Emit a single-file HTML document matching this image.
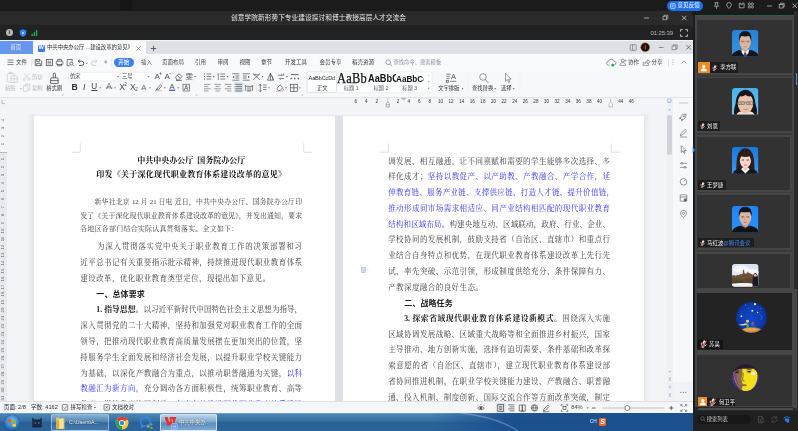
<!DOCTYPE html>
<html lang="zh-CN"><head><meta charset="utf-8"><title>meeting</title>
<style>
*{box-sizing:border-box;margin:0;padding:0}
html,body{width:798px;height:431px;overflow:hidden;background:#1c1c1d}
body{position:relative;font-family:"Liberation Sans","Noto Sans CJK SC",sans-serif;font-size:6px;color:#333;line-height:1}
.a{position:absolute}
.t{position:absolute;white-space:nowrap;line-height:1}
svg{position:absolute;overflow:visible}
#root{position:absolute;left:0;top:0;width:798px;height:431px;overflow:hidden;will-change:transform;transform:translateZ(0)}
/* document text */
.ln{position:absolute;font-weight:400;white-space:nowrap;font-family:"Liberation Serif","Noto Serif CJK SC",serif;font-size:7.500px;line-height:12px;height:12px;color:#3c3c3c;width:221.800px;text-align:justify;text-align-last:justify}
.ln.l{text-align:left;text-align-last:left;letter-spacing:0.420px}
.ln.s.l{letter-spacing:0.300px}
.ln.s{font-size:6.900px}
.ln b{font-weight:700;color:#222}
.ln b.hd{font-family:"Liberation Sans","Noto Sans CJK SC",sans-serif;font-size:8px;letter-spacing:0.100px}
.ln i{font-style:normal;color:#3434f4}
.ttl1{position:absolute;white-space:nowrap;margin-left:-1px;font-family:"Liberation Serif","Noto Serif CJK SC",serif;font-weight:700;font-size:8px;line-height:12px;color:#111;text-align:center;width:224px}
.ui{color:#3c4047}
</style></head>
<body>
<div id="root">

<div class="a" style="left:0;top:0;width:798px;height:11px;background:#1b1b1c"></div>
<div class="a" style="left:120px;top:0;width:12px;height:11px;background:#161617"></div>
<div class="a" style="left:0;top:11px;width:691.500px;height:14px;background:#2a2a2b"></div>
<div class="a" style="left:0;top:25.300px;width:691.500px;height:15.200px;background:#222223"></div><div class="a" style="left:691.500px;top:15px;width:3.800px;height:13px;background:#2a2c3c"></div>
<div class="t" style="left:231px;top:14.5px;font-size:6.7px;color:#e8e8e8;width:175px;text-align:justify;text-align-last:justify">创意学院新形势下专业建设探讨和博士教授高层人才交流会</div>


<svg style="left:640px;top:13px" width="50" height="10" viewBox="0 0 50 10">
 <path d="M4 5h5" stroke="#bdbdbd" stroke-width="0.8" fill="none"/>
 <rect x="23" y="3.2" width="3.6" height="3.6" stroke="#bdbdbd" stroke-width="0.7" fill="none"/>
 <path d="M24.2 3.2v-1h3.6v3.6h-1.2" stroke="#bdbdbd" stroke-width="0.7" fill="none"/>
 <path d="M42 2.8l4.4 4.4M46.400 2.8l-4.4 4.400" stroke="#d0d0d0" stroke-width="0.8" fill="none"/>
</svg>


<div class="a" style="left:6px;top:29px;width:7px;height:7px;border-radius:50%;background:#b9b9b9"></div>
<div class="t" style="left:8.400px;top:29.8px;font-size:5.5px;color:#222;font-weight:700">i</div>
<svg style="left:18.500px;top:28.500px" width="8" height="8" viewBox="0 0 8 8"><path d="M4 0.300L7.200 1.400V4C7.200 6 5.600 7.300 4 7.800C2.400 7.300 0.800 6 0.800 4V1.400Z" fill="#2f88ff"/><circle cx="4" cy="3.900" r="0.900" fill="#e6f0ff"/></svg>
<svg style="left:30.500px;top:28.500px" width="8" height="8" viewBox="0 0 8 8"><rect x="0.500" y="5" width="1.300" height="2" fill="#19b955"/><rect x="2.700" y="3.200" width="1.300" height="3.800" fill="#19b955"/><rect x="4.900" y="1" width="1.300" height="6" fill="#19b955"/></svg>
<div class="t" style="left:650.500px;top:29.500px;font-size:6px;color:#b8b8b8;letter-spacing:-0.100px">01:25:39</div>
<svg style="left:680px;top:28.500px" width="8" height="8" viewBox="0 0 8 8"><path d="M0.600 2.600V0.600H2.600M5.400 0.600H7.400V2.600M7.400 5.400V7.400H5.400M2.600 7.400H0.600V5.400" stroke="#d8d8d8" stroke-width="0.900" fill="none"/></svg>


<div class="a" style="left:666.500px;top:1px;width:36px;height:9.500px;border-radius:5px;background:#1d6ff2"></div>
<svg style="left:670px;top:2.800px" width="6" height="6" viewBox="0 0 6 6"><rect x="0.500" y="0.700" width="4.600" height="4.600" rx="0.600" fill="none" stroke="#fff" stroke-width="0.700"/><path d="M1.600 2.300h2.400M1.600 3.700h1.600" stroke="#fff" stroke-width="0.600"/></svg>
<div class="t" style="left:677.500px;top:2.800px;font-size:5.600px;color:#fff">意见反馈</div>
<svg style="left:712px;top:1px" width="86" height="10" viewBox="0 0 86 10">
 <g stroke="#c4c4c4" stroke-width="0.700" fill="none">
 <path d="M2.600 1.700h3.800M3.400 1.700v2.200l-1 1.300h4.200l-1-1.300V1.700M4.500 5.200v2.600"/>
 <path d="M17 1.500a2.300 2.300 0 0 1 2.300 2.300c0 1.500-2.300 3.700-2.300 3.700s-2.300-2.200-2.300-3.700A2.300 2.300 0 0 1 17 1.500z"/>
 <path d="M27.300 2.200h1.500v1.200h1.600V2.200h1.700v4.600h-4.800z"/>
 <rect x="36.300" y="2" width="2" height="2" rx="0.500"/><rect x="39.300" y="2" width="2" height="2" rx="0.500"/><rect x="36.300" y="5" width="2" height="2" rx="0.500"/><rect x="39.300" y="5" width="2" height="2" rx="0.500"/>
 <path d="M55 5h5"/>
 <rect x="67.200" y="3.400" width="3.800" height="3.600"/><path d="M68.400 3.400v-1.100h3.800v3.600h-1.200"/>
 <path d="M80.500 2.500l4.500 4.500M85 2.500l-4.500 4.500" stroke="#d8d8d8"/>
 </g>
</svg>


<div class="a" style="left:0;top:40px;width:693.200px;height:373px;background:#f3f4f7"></div>
<div class="a" style="left:0;top:40.500px;width:693.200px;height:13.500px;background:#dee0e6"></div>
<div class="a" style="left:0;top:40.500px;width:32.500px;height:13.500px;background:#6796f1"></div>
<div class="t" style="left:10.300px;top:45.200px;font-size:5.500px;color:#eef3ff">首页</div>
<div class="a" style="left:32.500px;top:40.800px;width:113px;height:13.200px;background:#fbfbfc;border-radius:2px 2px 0 0"></div>
<div class="a" style="left:37.800px;top:44.500px;width:7px;height:7px;background:#3a7af0;border-radius:1px"></div>
<div class="t" style="left:38.500px;top:45.300px;font-size:5.800px;color:#fff;font-weight:700">W</div>
<div class="t" style="left:47px;top:45.200px;font-size:5.400px;color:#2b2f36;letter-spacing:-0.050px">中共中央办公厅 ...建设改革的意见》</div>
<svg style="left:135px;top:44.600px" width="7" height="7" viewBox="0 0 7 7"><path d="M1.200 1.200l4.600 4.600M5.800 1.200l-4.600 4.600" stroke="#6d737c" stroke-width="0.600"/></svg>
<svg style="left:150px;top:44.600px" width="7" height="7" viewBox="0 0 7 7"><path d="M3.500 0.800v5.400M0.800 3.500h5.400" stroke="#3c4047" stroke-width="0.800"/></svg>
<div class="a" style="left:0;top:54px;width:693.200px;height:17px;background:#f9fafb"></div>
<div class="a" style="left:0;top:71px;width:693.200px;height:26.500px;background:#f7f8fa"></div>
<div class="a" style="left:0;top:97px;width:693.200px;height:0.700px;background:#e3e5ea"></div>


<svg style="left:626px;top:42px" width="66" height="11" viewBox="0 0 66 11">
 <rect x="4.200" y="2.700" width="6" height="5.600" rx="0.500" fill="none" stroke="#5d636c" stroke-width="0.600"/><path d="M6.600 2.700v5.600" stroke="#5d636c" stroke-width="0.600"/>
 <circle cx="19.200" cy="5.300" r="4.500" fill="#171312" stroke="#c98a3a" stroke-width="0.600"/>
 <path d="M18.800 2.400c1.400 0.400 1.600 1.700 0.700 2.500c1 0.600 0.800 2.200-0.600 2.700c0.300-0.900-0.500-1.300-0.400-2.300c0.100-1 0.900-1.600 0.300-2.900z" fill="#d8412f"/>
 <path d="M33 5.500h4.400" stroke="#5d636c" stroke-width="0.700"/>
 <rect x="46" y="4" width="4" height="3.800" fill="none" stroke="#5d636c" stroke-width="0.600"/><path d="M47.200 4v-1.200h4v3.800h-1.200" fill="none" stroke="#5d636c" stroke-width="0.600"/>
 <path d="M60.300 3l4.600 4.600M64.900 3l-4.600 4.600" stroke="#4a4f57" stroke-width="0.700"/>
</svg>

<svg style="left:6.500px;top:59px" width="8" height="7" viewBox="0 0 8 7"><path d="M0.500 1h6M0.500 3.300h6M0.500 5.600h6" stroke="#4a4f57" stroke-width="0.700"/></svg>
<div class="t ui" style="left:16px;top:60px;font-size:5.500px">文件</div>
<div class="a" style="left:30.700px;top:58.500px;width:0.500px;height:8px;background:#e3e5e9"></div>

<svg style="left:30px;top:56px" width="90" height="14" viewBox="30 56 90 14">
 <g stroke="#474c54" stroke-width="0.750" fill="none">
 <path d="M35.300 59.500h4.700l1.600 1.600v4.500h-6.300z"/><path d="M36.700 59.500v2.100h2.700v-2.100M36.700 65.600v-2.300h3.500v2.300"/>
 <rect x="46.300" y="59.500" width="6.200" height="6.200"/><path d="M47.600 61.300h1.600M50.200 61.300h1M47.600 62.700h3.600M47.600 64.100h1.200M49.800 64.100h1.400"/>
 <rect x="56.300" y="61.200" width="6.600" height="3.300" rx="0.800"/><path d="M57.700 61.200v-1.800h3.800v1.800M57.700 63.600v2.200h3.800v-2.200"/>
 <path d="M67.200 59.500h5v2M67.200 59.500v6.200h2.400"/><circle cx="71.300" cy="63.500" r="1.500"/><path d="M72.400 64.600l1.300 1.300"/>
 <path d="M78.300 61.200h3.400a2.100 2.100 0 0 1 0 4.200h-2.800M79.800 59.700l-1.600 1.500l1.600 1.500" stroke="#33373e" stroke-width="0.850"/>
 </g>
 <path d="M96.800 61.200h-3.200a2.100 2.100 0 0 0 0 4.200h2.600M95.400 59.700l1.600 1.500l-1.600 1.500" stroke="#c0c3c9" stroke-width="0.800" fill="none"/>
 <path d="M85.700 62.700h2l-1 1.200z" fill="#474c54"/>
 <path d="M104.700 62h2l-1 1.300z" fill="none" stroke="#474c54" stroke-width="0.450"/><path d="M104.600 61h2.200" stroke="#474c54" stroke-width="0.500"/>
 <path d="M111.400 58.500v8" stroke="#dcdee3" stroke-width="0.500"/>
</svg>

<div class="a" style="left:114px;top:57.800px;width:19.500px;height:9px;border-radius:4.500px;background:#3d7ff5"></div>
<div class="t" style="left:118.300px;top:60px;font-size:5.500px;color:#fff;font-weight:500">开始</div>
<div class="t ui" style="left:141px;top:60px;font-size:5.500px">插入</div>
<div class="t ui" style="left:162px;top:60px;font-size:5.500px">页面布局</div>
<div class="t ui" style="left:195px;top:60px;font-size:5.500px">引用</div>
<div class="t ui" style="left:217.5px;top:60px;font-size:5.500px">审阅</div>
<div class="t ui" style="left:239.5px;top:60px;font-size:5.500px">视图</div>
<div class="t ui" style="left:261px;top:60px;font-size:5.500px">章节</div>
<div class="t ui" style="left:285px;top:60px;font-size:5.500px">开发工具</div>
<div class="t ui" style="left:319.5px;top:60px;font-size:5.500px">会员专享</div>
<div class="t ui" style="left:352px;top:60px;font-size:5.500px">稻壳资源</div>
<svg style="left:385.300px;top:58.600px" width="8.200" height="8.200" viewBox="0 0 7 7"><circle cx="2.800" cy="2.800" r="2" fill="none" stroke="#7c8290" stroke-width="0.600"/><path d="M4.300 4.300l1.800 1.800" stroke="#7c8290" stroke-width="0.600"/></svg>
<div class="t" style="left:393.500px;top:60.200px;font-size:5.300px;color:#8a90a0">查找命令、搜索模板</div>

<svg style="left:606px;top:57.500px" width="12" height="10" viewBox="0 0 12 10"><path d="M3.300 7.200h-0.600a1.900 1.900 0 0 1-0.200-3.800a2.700 2.700 0 0 1 5.200-0.300a2 2 0 0 1 0.800 3.900" fill="none" stroke="#5d636c" stroke-width="0.650"/><circle cx="6.800" cy="7" r="1.600" fill="#19b955"/></svg>
<svg style="left:619px;top:58px" width="9" height="9" viewBox="0 0 9 9"><circle cx="3.800" cy="2.600" r="1.500" fill="none" stroke="#5d636c" stroke-width="0.600"/><path d="M1 7.400c0-2 1.200-2.800 2.800-2.800s2.800 0.800 2.800 2.800z" fill="none" stroke="#5d636c" stroke-width="0.600"/><path d="M6.600 1.600v2M5.600 2.600h2" stroke="#5d636c" stroke-width="0.500"/></svg>
<div class="t ui" style="left:628px;top:60px;font-size:5.500px">协作</div>
<svg style="left:642px;top:58px" width="9" height="9" viewBox="0 0 9 9"><path d="M2.200 4.400h-1v3h5.600v-1.400" fill="none" stroke="#5d636c" stroke-width="0.600"/><path d="M2.800 5.800c0.200-1.800 1.400-2.800 3-2.800v-1.400l2.200 2.200l-2.200 2.200v-1.400c-1.200 0-2.200 0.200-3 1.200z" fill="none" stroke="#5d636c" stroke-width="0.600"/></svg>
<div class="t ui" style="left:651.500px;top:60px;font-size:5.500px">分享</div>
<div class="a" style="left:668px;top:58.500px;width:0.500px;height:8px;background:#e0e2e6"></div>
<svg style="left:670px;top:58px" width="20" height="9" viewBox="0 0 20 9"><circle cx="3" cy="2" r="0.450" fill="#5d636c"/><circle cx="3" cy="4.300" r="0.450" fill="#5d636c"/><circle cx="3" cy="6.600" r="0.450" fill="#5d636c"/><path d="M11.300 5.600l2.600-2.600l2.600 2.600" fill="none" stroke="#6d737c" stroke-width="0.700"/></svg>


<svg style="left:0;top:71px" width="530" height="27" viewBox="0 71 530 27">
 <!-- paste -->
 <g stroke="#c5c8ce" stroke-width="0.700" fill="none">
  <rect x="7.300" y="73.500" width="7" height="8.500" rx="0.800"/><path d="M9.300 73.500v-0.900h3v0.900"/>
  <rect x="11" y="76" width="6.300" height="6.400" rx="0.600" fill="#f7f8fa"/><path d="M11 78.600h6.300M14.100 78.600v3.800"/>
 </g>
 <!-- cut -->
 <g stroke="#c5c8ce" stroke-width="0.700" fill="none">
  <path d="M24 73.300l4.800 5.200M29.600 73.300l-4.800 5.200"/><circle cx="24.300" cy="79.300" r="1"/><circle cx="29.300" cy="79.300" r="1"/>
  <rect x="23.300" y="85.800" width="4.600" height="5.400" rx="0.500"/><path d="M25.200 85.800v-1.500h4.600v5.400h-1.900"/>
 </g>
 <!-- format painter -->
 <g stroke="#3c4047" stroke-width="0.750" fill="none">
  <path d="M53.300 77.800v-3.600a1.100 1.100 0 0 1 2.200 0v3.600"/><path d="M50.600 83.400v-4.200a1.400 1.400 0 0 1 1.400-1.400h4.800a1.400 1.400 0 0 1 1.400 1.400v4.200z"/><path d="M50.600 80.600h7.600"/>
 </g>
 <path d="M63.300 94v1.300h-1.300" stroke="#9aa0aa" stroke-width="0.500" fill="none"/>
 <!-- font boxes -->
 <rect x="68.500" y="72.400" width="52.100" height="8.500" rx="0.800" fill="#fff" stroke="#e1e3e8" stroke-width="0.500"/>
 <rect x="120.600" y="72.400" width="30.600" height="8.500" rx="0.800" fill="#fff" stroke="#e1e3e8" stroke-width="0.500"/>
 <path d="M117.0 76.2h2l-1 1.200z" fill="#4a4f57"/><path d="M147.5 76.2h2l-1 1.200z" fill="#4a4f57"/>
 <!-- eraser -->
 <g stroke="#4a4f57" stroke-width="0.700" fill="none"><path d="M175.500 77.200l3.600-3.600l3 3l-3.600 3.600h-1.600z"/><path d="M177.300 75.400l3 3M176 80.400h6"/></g>
 <path d="M194.1 76.2h2l-1 1.200z" fill="#4a4f57"/>
 <!-- highlight pen -->
 <g stroke="#4a4f57" stroke-width="0.700" fill="none"><path d="M157 88.600l3.400-4l1.400 1.200l-3.400 4z"/><path d="M157 88.600l-0.800 1.600l1.800-0.400"/></g>
 <path d="M155 90.800h7" stroke="#e9a3a3" stroke-width="0.800"/>
 <path d="M169 90.200h6.200" stroke="#2222ee" stroke-width="1"/>
 <rect x="183" y="84.200" width="6.600" height="6.800" fill="none" stroke="#4a4f57" stroke-width="0.650"/>
 <g fill="#4a4f57"><path d="M99.2 87.4h2l-1 1.200z"/><path d="M114.0 87.4h2l-1 1.200z"/><path d="M149.0 87.4h2l-1 1.200z"/><path d="M163.7 87.4h2l-1 1.200z"/><path d="M177.2 87.4h2l-1 1.200z"/></g>
 <path d="M106 87.800h6.500" stroke="#4a4f57" stroke-width="0.500"/>
 <path d="M197 94v1.300h-1.300" stroke="#9aa0aa" stroke-width="0.500" fill="none"/>
 <!-- paragraph row1 -->
 <g stroke="#4a4f57" stroke-width="0.700" fill="none">
  <path d="M206.500 74h4.800M206.500 76.500h4.800M206.500 79h4.800"/><path d="M204 74h1M204 76.500h1M204 79h1" stroke-width="1"/>
  <path d="M220.300 74h4.800M220.300 76.500h4.800M220.300 79h4.800"/><path d="M218.300 73v7" stroke-width="0.600"/>
  <path d="M232.300 73.800h7M235.300 76h4M235.300 78h4M232.300 80.200h7"/><path d="M234.200 75.700v2.600l-1.700-1.300z" fill="#4a4f57" stroke="none"/>
  <path d="M242.800 73.800h7M242.800 76h4M242.800 78h4M242.800 80.200h7"/><path d="M248 75.700v2.600l1.700-1.300z" fill="#4a4f57" stroke="none"/>
  <path d="M253 73.600l7 6.400M260 73.600l-7 6.400M254 74.800h5"/>
  <path d="M270.500 73.200l-3 7h6.200zM270.500 73.200v7M272 76l1 4"/>
  <path d="M278 75.200h4.600l-1.200-1.200M284 78.600h-4.600l1.200 1.200M283.500 73.600v2"/>
  <path d="M291 74.600h7.600" stroke-width="0.900"/><path d="M291 78v1.600M294.800 78v1.600M298.600 78v1.600M291 78.300h1.400M294 78.300h1.600M297.200 78.300h1.400"/>
 </g>
 <g fill="#4a4f57"><path d="M212.6 76.2h2l-1 1.200z"/><path d="M226.6 76.2h2l-1 1.200z"/><path d="M261.5 76.2h2l-1 1.200z"/><path d="M286.0 76.2h2l-1 1.200z"/></g>
 <!-- paragraph row2 -->
 <rect x="233.800" y="82" width="9.800" height="10.400" rx="0.800" fill="#dde3ec"/>
 <g stroke="#4a4f57" stroke-width="0.700" fill="none">
  <g stroke="#5a5f68" stroke-width="0.600"><path d="M204 84.400h6.600M204 86.600h4.400M204 88.800h6.600M204 91h4.400"/>
  <path d="M214.400 84.400h6.600M215.600 86.600h4.200M214.400 88.800h6.600M215.600 91h4.200"/>
  <path d="M224.800 84.400h6.600M227 86.600h4.400M224.800 88.800h6.600M227 91h4.400"/></g>
  <path d="M235.300 84.400h6.800M235.300 86.600h6.800M235.300 88.800h6.800M235.300 91h6.800" stroke="#3c4047" stroke-width="0.650"/>
  <path d="M245.600 85v6M252.600 85v6M245.600 86.300h7M247 88h4.200M247 90h4.200M247 91h4.200" />
  <path d="M260.300 84.300v7.400M259 85.600l1.300-1.400l1.300 1.400M259 90.400l1.300 1.400l1.300-1.400M263 85h3.600M263 87.300h3.600M263 89.600h3.600"/>
  <path d="M277 88.300l3-3.400l2.800 2.600l-2.600 3h-2z"/><path d="M282.800 88.500c0.800 1 0.800 1.600 0 1.800"/>
  <rect x="290.300" y="84.300" width="7" height="7"/><path d="M293.800 84.300v7M290.300 87.800h7"/>
 </g>
 <path d="M276 91.200h7" stroke="#e9a3a3" stroke-width="0.800"/>
 <path d="M256.500 83.500v8" stroke="#e3e5ea" stroke-width="0.500"/><path d="M273 83.500v8" stroke="#e3e5ea" stroke-width="0.500"/>
 <g fill="#4a4f57"><path d="M268.0 87.4h2l-1 1.200z"/><path d="M285.0 87.4h2l-1 1.200z"/><path d="M298.7 87.4h2l-1 1.200z"/></g>
 <path d="M302.600 94v1.300h-1.300" stroke="#9aa0aa" stroke-width="0.500" fill="none"/>
 <!-- style gallery -->
 <rect x="306.900" y="71.800" width="125.300" height="20.800" rx="1" fill="#fdfdfe" stroke="#e6e8ec" stroke-width="0.500"/>
 <rect x="307.200" y="72.100" width="29.300" height="20.200" rx="1" fill="#fff" stroke="#cfd3da" stroke-width="0.600"/>
 <g fill="#8a9099"><path d="M427.900 75.600h1.400l-0.700-0.900z"/><path d="M427.6 81.3h2l-1 1.200z"/><path d="M427.6 88.1h2l-1 1.200z"/></g>
 <path d="M427.800 87.400h1.600" stroke="#8a9099" stroke-width="0.400"/>
 <!-- text layout -->
 <g stroke="#4a4f57" stroke-width="0.700" fill="none"><path d="M446.300 74.200h4.300M446.300 76.300h3.400M446.300 78.400h3.400"/><rect x="446.300" y="80.300" width="2" height="2"/><path d="M450 81.300h6.300"/><path d="M451.300 79l2.200-5l2.200 5M452.200 77.400h2.600"/></g>
 <!-- find -->
 <g stroke="#70757e" stroke-width="0.750" fill="none"><circle cx="483" cy="77" r="3.300"/><path d="M485.400 79.600l3.200 3.400"/></g>
 <!-- select arrow -->
 <path d="M505.500 73.200v8l1.900-1.700l1.300 3l1.200-0.500l-1.300-2.900h2.500z" fill="none" stroke="#70757e" stroke-width="0.700"/>
 <g fill="#4a4f57"><path d="M461.5 88.2h2l-1 1.200z"/><path d="M494.2 88.2h2l-1 1.200z"/><path d="M512.7 88.2h2l-1 1.200z"/></g>
 <path d="M468 74v18M520 74v18" stroke="#eceef1" stroke-width="0.500"/>
 <path d="M20.0 88.2h2l-1 1.200z" fill="#9ea3ab"/>
</svg>

<div class="t" style="left:5px;top:85.7px;font-size:5.3px;color:#b4b8bf;">粘贴</div>
<div class="t" style="left:32px;top:74.6px;font-size:5.3px;color:#b4b8bf;">剪切</div>
<div class="t" style="left:32px;top:85.7px;font-size:5.3px;color:#b4b8bf;">复制</div>
<div class="t" style="left:46.3px;top:85.8px;font-size:5.3px;color:#2b2f36;">格式刷</div>
<div class="t" style="left:70px;top:74px;font-size:5.3px;color:#2b2f36;">仿宋</div>
<div class="t" style="left:122px;top:74px;font-size:5.3px;color:#2b2f36;">三号</div>
<div class="t" style="left:154.5px;top:72.6px;font-size:8px;color:#4a4f57;">A</div>
<div class="t" style="left:159.3px;top:72.3px;font-size:4.5px;color:#4a4f57;font-weight:700">+</div>
<div class="t" style="left:164.5px;top:72.6px;font-size:8px;color:#4a4f57;">A</div>
<div class="t" style="left:169.3px;top:72.3px;font-size:4.5px;color:#4a4f57;font-weight:700">-</div>
<div class="t" style="left:185.6px;top:72.6px;font-size:7.4px;color:#4a4f57;">雯</div>
<div class="t" style="left:71.5px;top:83.2px;font-size:8.6px;color:#2b2f36;font-weight:700">B</div>
<div class="t" style="left:83px;top:83.2px;font-size:8.6px;color:#3c4047;font-style:italic">I</div>
<div class="t" style="left:91.3px;top:83.4px;font-size:8.2px;color:#3c4047;text-decoration:underline">U</div>
<div class="t" style="left:106.3px;top:83.4px;font-size:8.2px;color:#4a4f57;">A</div>
<div class="t" style="left:119.3px;top:83.2px;font-size:8.6px;color:#4a4f57;">X</div>
<div class="t" style="left:124.6px;top:83.2px;font-size:4.5px;color:#4a4f57;">2</div>
<div class="t" style="left:130px;top:83.2px;font-size:8.6px;color:#4a4f57;">X</div>
<div class="t" style="left:135.3px;top:87.6px;font-size:4.5px;color:#4a4f57;">2</div>
<div class="t" style="left:140.9px;top:83.6px;font-size:7.8px;color:#8d929b;font-weight:700">A</div>
<div class="t" style="left:169.6px;top:82.7px;font-size:7.6px;color:#4a4f57;">A</div>
<div class="t" style="left:184.1px;top:84.6px;font-size:6.4px;color:#4a4f57;">A</div>
<div class="t" style="left:308.6px;top:76.2px;font-size:5.5px;color:#222;letter-spacing:-0.100px">AaBbCcDd</div>
<div class="t" style="left:317px;top:85.6px;font-size:5.3px;color:#3c4047;">正文</div>
<div class="t" style="left:337.300px;top:71.300px;font-size:15px;color:#111;font-family:'Liberation Serif',serif;transform:scaleX(0.830);transform-origin:0 0;letter-spacing:0.300px;-webkit-text-stroke:0.250px #111">AaBb</div>
<div class="t" style="left:343.8px;top:85.6px;font-size:5.3px;color:#5a5f68;">标题 1</div>
<div class="a" style="left:367.500px;top:72px;width:28.800px;height:14px;overflow:hidden"><div class="t" style="left:0;top:1.600px;font-size:10.400px;font-weight:700;color:#111;transform:scaleX(0.890);transform-origin:0 0">AaBbCc</div></div>
<div class="a" style="left:396.300px;top:72px;width:28.200px;height:14px;overflow:hidden"><div class="t" style="left:0;top:2.600px;font-size:9.200px;font-weight:700;color:#111;transform:scaleX(0.890);transform-origin:0 0">AaBbCcD</div></div>
<div class="t" style="left:373.5px;top:85.6px;font-size:5.3px;color:#5a5f68;">标题 2</div>
<div class="t" style="left:402.3px;top:85.6px;font-size:5.3px;color:#5a5f68;">标题 3</div>
<div class="t" style="left:438.2px;top:86.2px;font-size:5.3px;color:#2b2f36;">文字排版</div>
<div class="t" style="left:472px;top:86.2px;font-size:5.3px;color:#2b2f36;">查找替换</div>
<div class="t" style="left:501px;top:86.2px;font-size:5.3px;color:#2b2f36;">选择</div>
<div class="a" style="left:0;top:97.700px;width:693.200px;height:10.300px;background:#f3f4f7"></div>

<div class="a" style="left:387.500px;top:98.500px;width:223.500px;height:8px;background:#f4f5f8"></div>
<div class="t" style="left:394.1px;top:99.800px;width:8px;text-align:center;font-size:4.600px;color:#30343b">2</div>
<div class="t" style="left:404.7px;top:99.800px;width:8px;text-align:center;font-size:4.600px;color:#30343b">4</div>
<div class="t" style="left:415.3px;top:99.800px;width:8px;text-align:center;font-size:4.600px;color:#30343b">6</div>
<div class="t" style="left:425.9px;top:99.800px;width:8px;text-align:center;font-size:4.600px;color:#30343b">8</div>
<div class="t" style="left:436.5px;top:99.800px;width:8px;text-align:center;font-size:4.600px;color:#30343b">10</div>
<div class="t" style="left:447.1px;top:99.800px;width:8px;text-align:center;font-size:4.600px;color:#30343b">12</div>
<div class="t" style="left:457.7px;top:99.800px;width:8px;text-align:center;font-size:4.600px;color:#30343b">14</div>
<div class="t" style="left:468.3px;top:99.800px;width:8px;text-align:center;font-size:4.600px;color:#30343b">16</div>
<div class="t" style="left:478.9px;top:99.800px;width:8px;text-align:center;font-size:4.600px;color:#30343b">18</div>
<div class="t" style="left:489.5px;top:99.800px;width:8px;text-align:center;font-size:4.600px;color:#30343b">20</div>
<div class="t" style="left:500.1px;top:99.800px;width:8px;text-align:center;font-size:4.600px;color:#30343b">22</div>
<div class="t" style="left:510.7px;top:99.800px;width:8px;text-align:center;font-size:4.600px;color:#30343b">24</div>
<div class="t" style="left:521.3px;top:99.800px;width:8px;text-align:center;font-size:4.600px;color:#30343b">26</div>
<div class="t" style="left:531.9px;top:99.800px;width:8px;text-align:center;font-size:4.600px;color:#30343b">28</div>
<div class="t" style="left:542.5px;top:99.800px;width:8px;text-align:center;font-size:4.600px;color:#30343b">30</div>
<div class="t" style="left:553.1px;top:99.800px;width:8px;text-align:center;font-size:4.600px;color:#30343b">32</div>
<div class="t" style="left:563.7px;top:99.800px;width:8px;text-align:center;font-size:4.600px;color:#30343b">34</div>
<div class="t" style="left:574.3px;top:99.800px;width:8px;text-align:center;font-size:4.600px;color:#30343b">36</div>
<div class="t" style="left:584.9px;top:99.800px;width:8px;text-align:center;font-size:4.600px;color:#30343b">38</div>
<div class="t" style="left:595.5px;top:99.800px;width:8px;text-align:center;font-size:4.600px;color:#30343b">40</div>
<div class="t" style="left:351.7px;top:99.800px;width:8px;text-align:center;font-size:4.600px;color:#30343b">6</div>
<div class="t" style="left:362.3px;top:99.800px;width:8px;text-align:center;font-size:4.600px;color:#30343b">4</div>
<div class="t" style="left:372.9px;top:99.800px;width:8px;text-align:center;font-size:4.600px;color:#30343b">2</div>
<div class="t" style="left:616.7px;top:99.800px;width:8px;text-align:center;font-size:4.600px;color:#30343b">44</div>
<div class="t" style="left:627.3px;top:99.800px;width:8px;text-align:center;font-size:4.600px;color:#30343b">46</div>

<svg style="left:380px;top:97px" width="240" height="11" viewBox="380 97 240 11">
 <path d="M401.800 98.300h3.600l-1.800 1.900z" fill="#fff" stroke="#5d636c" stroke-width="0.500"/>
 <path d="M387.800 98.300v4" stroke="#7a7f88" stroke-width="0.400"/>
 <path d="M386.300 107v-3.400l1.500-1.400l1.500 1.400v3.400zM386.300 104.800h3" fill="#fff" stroke="#5d636c" stroke-width="0.500"/>
 <path d="M609 106.800v-3l1.700-1.600l1.700 1.600v3z" fill="#fff" stroke="#7a7f88" stroke-width="0.500"/>
 <path d="M610.700 98.500v3.600" stroke="#7a7f88" stroke-width="0.400"/>
</svg>
<svg style="left:1px;top:99px" width="6" height="6" viewBox="0 0 6 6"><path d="M1 1v3.600h3" stroke="#8a9099" stroke-width="0.600" fill="none"/></svg>

<div class="a" style="left:0;top:108px;width:7px;height:293px;background:#f4f5f8"></div>
<div class="a" style="left:0;top:152px;width:7px;height:249px;background:#e8eaef"></div>
<div class="a" style="left:0;top:151.700px;width:7px;height:0.600px;background:#b5b9c1"></div>
<div class="t" style="left:1px;top:118.3px;width:5px;text-align:center;font-size:4.200px;color:#5d626b;transform:rotate(-90deg)">4</div>
<div class="t" style="left:1px;top:125.8px;width:5px;text-align:center;font-size:4.200px;color:#5d626b;transform:rotate(-90deg)">3</div>
<div class="t" style="left:1px;top:133.8px;width:5px;text-align:center;font-size:4.200px;color:#5d626b;transform:rotate(-90deg)">2</div>
<div class="t" style="left:1px;top:141.8px;width:5px;text-align:center;font-size:4.200px;color:#5d626b;transform:rotate(-90deg)">1</div>
<div class="t" style="left:1px;top:157.3px;width:5px;text-align:center;font-size:4.200px;color:#5d626b;transform:rotate(-90deg)">1</div>
<div class="t" style="left:1px;top:165.2px;width:5px;text-align:center;font-size:4.200px;color:#5d626b;transform:rotate(-90deg)">2</div>
<div class="t" style="left:1px;top:173.2px;width:5px;text-align:center;font-size:4.200px;color:#5d626b;transform:rotate(-90deg)">3</div>
<div class="t" style="left:1px;top:181.1px;width:5px;text-align:center;font-size:4.200px;color:#5d626b;transform:rotate(-90deg)">4</div>
<div class="t" style="left:1px;top:189.1px;width:5px;text-align:center;font-size:4.200px;color:#5d626b;transform:rotate(-90deg)">5</div>
<div class="t" style="left:1px;top:197.0px;width:5px;text-align:center;font-size:4.200px;color:#5d626b;transform:rotate(-90deg)">6</div>
<div class="t" style="left:1px;top:205.0px;width:5px;text-align:center;font-size:4.200px;color:#5d626b;transform:rotate(-90deg)">7</div>
<div class="t" style="left:1px;top:212.9px;width:5px;text-align:center;font-size:4.200px;color:#5d626b;transform:rotate(-90deg)">8</div>
<div class="t" style="left:1px;top:220.9px;width:5px;text-align:center;font-size:4.200px;color:#5d626b;transform:rotate(-90deg)">9</div>
<div class="t" style="left:1px;top:228.8px;width:5px;text-align:center;font-size:4.200px;color:#5d626b;transform:rotate(-90deg)">10</div>
<div class="t" style="left:1px;top:236.8px;width:5px;text-align:center;font-size:4.200px;color:#5d626b;transform:rotate(-90deg)">11</div>
<div class="t" style="left:1px;top:244.7px;width:5px;text-align:center;font-size:4.200px;color:#5d626b;transform:rotate(-90deg)">12</div>
<div class="t" style="left:1px;top:252.7px;width:5px;text-align:center;font-size:4.200px;color:#5d626b;transform:rotate(-90deg)">13</div>
<div class="t" style="left:1px;top:260.6px;width:5px;text-align:center;font-size:4.200px;color:#5d626b;transform:rotate(-90deg)">14</div>
<div class="t" style="left:1px;top:268.6px;width:5px;text-align:center;font-size:4.200px;color:#5d626b;transform:rotate(-90deg)">15</div>
<div class="t" style="left:1px;top:276.5px;width:5px;text-align:center;font-size:4.200px;color:#5d626b;transform:rotate(-90deg)">16</div>
<div class="t" style="left:1px;top:284.5px;width:5px;text-align:center;font-size:4.200px;color:#5d626b;transform:rotate(-90deg)">17</div>
<div class="t" style="left:1px;top:292.4px;width:5px;text-align:center;font-size:4.200px;color:#5d626b;transform:rotate(-90deg)">18</div>
<div class="t" style="left:1px;top:300.4px;width:5px;text-align:center;font-size:4.200px;color:#5d626b;transform:rotate(-90deg)">19</div>
<div class="t" style="left:1px;top:308.3px;width:5px;text-align:center;font-size:4.200px;color:#5d626b;transform:rotate(-90deg)">20</div>
<div class="t" style="left:1px;top:316.3px;width:5px;text-align:center;font-size:4.200px;color:#5d626b;transform:rotate(-90deg)">21</div>
<div class="t" style="left:1px;top:324.2px;width:5px;text-align:center;font-size:4.200px;color:#5d626b;transform:rotate(-90deg)">22</div>
<div class="t" style="left:1px;top:332.2px;width:5px;text-align:center;font-size:4.200px;color:#5d626b;transform:rotate(-90deg)">23</div>
<div class="t" style="left:1px;top:340.1px;width:5px;text-align:center;font-size:4.200px;color:#5d626b;transform:rotate(-90deg)">24</div>
<div class="t" style="left:1px;top:348.1px;width:5px;text-align:center;font-size:4.200px;color:#5d626b;transform:rotate(-90deg)">25</div>
<div class="t" style="left:1px;top:356.0px;width:5px;text-align:center;font-size:4.200px;color:#5d626b;transform:rotate(-90deg)">26</div>
<div class="t" style="left:1px;top:364.0px;width:5px;text-align:center;font-size:4.200px;color:#5d626b;transform:rotate(-90deg)">27</div>
<div class="t" style="left:1px;top:371.9px;width:5px;text-align:center;font-size:4.200px;color:#5d626b;transform:rotate(-90deg)">28</div>
<div class="t" style="left:1px;top:379.9px;width:5px;text-align:center;font-size:4.200px;color:#5d626b;transform:rotate(-90deg)">29</div>
<div class="t" style="left:1px;top:387.8px;width:5px;text-align:center;font-size:4.200px;color:#5d626b;transform:rotate(-90deg)">30</div>
<div class="t" style="left:1px;top:395.8px;width:5px;text-align:center;font-size:4.200px;color:#5d626b;transform:rotate(-90deg)">31</div>
<div class="a" style="left:27.500px;top:114px;width:7px;height:287px;background:linear-gradient(90deg,rgba(224,226,232,0),#e0e2e8)"></div>
<div class="a" style="left:335px;top:115.500px;width:8.200px;height:285.500px;background:#dfe1e6"></div>
<div class="a" style="left:644px;top:114px;width:6px;height:287px;background:linear-gradient(270deg,rgba(232,234,239,0),#e6e8ed)"></div>
<div class="a" style="left:30px;top:113.500px;width:618px;height:2.200px;background:linear-gradient(180deg,rgba(232,234,239,0),#e8eaef)"></div>
<div class="a" style="left:34.300px;top:115.500px;width:301px;height:286px;background:#fff"></div>
<div class="a" style="left:343px;top:115.500px;width:301px;height:286px;background:#fff"></div>

<svg style="left:0;top:108px" width="692" height="294" viewBox="0 108 692 294"><g stroke="#c9ccd2" stroke-width="0.600" fill="none">
<path d="M71.500 152.300h8.800v-9"/><path d="M312.500 152.300h-8.800v-9"/>
<path d="M379.500 152.300h8.800v-9"/><path d="M620 152.300h-8.800v-9"/>
</g>
<g><rect x="361.500" y="267.500" width="4" height="5" fill="#dfe8fb" stroke="#7da2ee" stroke-width="0.500"/><path d="M362.500 269.300h2M362.500 270.800h2" stroke="#7da2ee" stroke-width="0.400"/><path d="M367.300 269.800h1.300l-0.650 0.800z" fill="#8a9099"/></g>
</svg>

<div class="ttl1" style="left:80.3px;top:155.1px">中共中央办公厅&nbsp; 国务院办公厅</div>
<div class="ttl1" style="left:80.3px;top:169.29999999999998px;letter-spacing:0.260px">印发《关于深化现代职业教育体系建设改革的意见》</div>
<div class="ln s" style="left:80.3px;top:196.2px"><span style="display:inline-block;width:14px"></span>新华社北京 12 月 21 日电 近日，中共中央办公厅、国务院办公厅印</div>
<div class="ln s" style="left:80.3px;top:209.5px">发了《关于深化现代职业教育体系建设改革的意见》，并发出通知，要求</div>
<div class="ln s l" style="left:80.3px;top:222.7px">各地区各部门结合实际认真贯彻落实。全文如下：</div>
<div class="ln " style="left:80.3px;top:241.2px"><span style="display:inline-block;width:16px"></span>为深入贯彻落实党中央关于职业教育工作的决策部署和习</div>
<div class="ln " style="left:80.3px;top:257.2px">近平总书记有关重要指示批示精神，持续推进现代职业教育体系</div>
<div class="ln l" style="left:80.3px;top:273.2px">建设改革，优化职业教育类型定位，现提出如下意见。</div>
<div class="ln l" style="left:80.3px;top:288.8px"><span style="display:inline-block;width:16px"></span><b class="hd">一、总体要求</b></div>
<div class="ln " style="left:80.3px;top:304.3px"><span style="display:inline-block;width:16px"></span><b style="font-size:7.800px">1. 指导思想。</b>以习近平新时代中国特色社会主义思想为指导，</div>
<div class="ln " style="left:80.3px;top:319.8px">深入贯彻党的二十大精神，坚持和加强党对职业教育工作的全面</div>
<div class="ln " style="left:80.3px;top:335.8px">领导，把推动现代职业教育高质量发展摆在更加突出的位置，坚</div>
<div class="ln " style="left:80.3px;top:351.8px">持服务学生全面发展和经济社会发展，以提升职业学校关键能力</div>
<div class="ln " style="left:80.3px;top:367.5px">为基础，以深化产教融合为重点，以推动职普融通为关键，<i>以科</i></div>
<div class="ln " style="left:80.3px;top:383.2px"><i>教融汇为新方向，</i>充分调动各方面积极性，统筹职业教育、高等</div>
<div class="ln " style="left:80.3px;top:399.1px">教育、继续教育协同创新，<i>有序有效推进现代职业教育体系建设</i></div>
<div class="ln " style="left:388.2px;top:155.5px">调发展、相互融通，让不同禀赋和需要的学生能够多次选择、多</div>
<div class="ln " style="left:388.2px;top:171.2px">样化成才；<i>坚持以教促产、以产助教、产教融合、产学合作，延</i></div>
<div class="ln " style="left:388.2px;top:186.7px"><i>伸教育链、服务产业链、支撑供应链、打造人才链、提升价值链<span style="display:inline-block;width:3.500px">，</span></i></div>
<div class="ln " style="left:388.2px;top:202.7px"><i>推动形成同市场需求相适应、同产业结构相匹配的现代职业教育</i></div>
<div class="ln " style="left:388.2px;top:218.5px"><i>结构和区域布局。</i>构建央地互动、区域联动，政府、行业、企业、</div>
<div class="ln " style="left:388.2px;top:234.2px">学校协同的发展机制，鼓励支持省（自治区、直辖市）和重点行</div>
<div class="ln " style="left:388.2px;top:249.8px">业结合自身特点和优势，在现代职业教育体系建设改革上先行先</div>
<div class="ln " style="left:388.2px;top:265.5px">试、率先突破、示范引领，形成制度供给充分、条件保障有力、</div>
<div class="ln l" style="left:388.2px;top:281.7px">产教深度融合的良好生态。</div>
<div class="ln l" style="left:388.2px;top:297.7px"><span style="display:inline-block;width:16px"></span><b class="hd">二、战略任务</b></div>
<div class="ln " style="left:388.2px;top:312.7px"><span style="display:inline-block;width:16px"></span><b style="font-size:7.800px">3. 探索省域现代职业教育体系建设新模式。</b>围绕深入实施</div>
<div class="ln " style="left:388.2px;top:328.7px">区域协调发展战略、区域重大战略等和全面推进乡村振兴，国家</div>
<div class="ln " style="left:388.2px;top:344.2px">主导推动、地方创新实施，选择有迫切需要、条件基础和改革探</div>
<div class="ln " style="left:388.2px;top:360.0px">索意愿的省（自治区、直辖市），建立现代职业教育体系建设部</div>
<div class="ln " style="left:388.2px;top:375.5px">省协同推进机制，在职业学校关键能力建设、产教融合、职普融</div>
<div class="ln " style="left:388.2px;top:391.5px">通、投入机制、制度创新、国际交流合作等方面改革突破，制定</div>

<div class="a" style="left:666.500px;top:97.700px;width:6.500px;height:304px;background:#eef0f4"></div>
<div class="a" style="left:667.300px;top:114.500px;width:5.200px;height:40.500px;border-radius:2.600px;background:#d0d3da"></div>
<div class="a" style="left:673px;top:97.700px;width:19.500px;height:304px;background:#f7f8fa"></div>
<div class="a" style="left:673px;top:381.500px;width:19.500px;height:20px;background:#f1f2f5"></div>
<div class="a" style="left:679px;top:102px;width:9px;height:1.600px;border-radius:1px;background:#dcdfe4"></div>
<svg style="left:666px;top:97px" width="27" height="305" viewBox="666 97 27 305">
 <rect x="667.800" y="99" width="3.200" height="3.600" fill="#f7f9ff" stroke="#7f9be0" stroke-width="0.500"/><path d="M667.800 101.300h3.200" stroke="#7f9be0" stroke-width="0.400"/>
 <path d="M668.600 110.200h1.800l-0.900-1.100z" fill="#7f86a8"/>
 <g stroke="#5d636c" stroke-width="0.650" fill="none">
  <!-- rocket -->
  <path d="M680.500 118.500c0-2.500 2.200-4.600 5.600-4.400c0.200 3.200-1.800 5.600-4.400 5.600z"/><circle cx="684" cy="116.400" r="0.700"/><path d="M680.500 118.500l-1 0.300l0.800-1.800M681.700 119.700l-0.300 1l1.800-0.800"/>
  <!-- pen -->
  <path d="M680.300 135.600l0.600-2l4.300-4.300l1.400 1.400l-4.300 4.300z"/><path d="M680 137h7"/>
  <!-- cursor -->
  <path d="M681.300 145.600v6.800l1.700-1.500l1.100 2.500l1-0.400l-1.100-2.500h2.200z"/>
  <!-- sliders -->
  <path d="M680 163.300h7M680 167.300h7"/><circle cx="682" cy="163.300" r="0.900" fill="#f7f8fa"/><circle cx="685" cy="167.300" r="0.900" fill="#f7f8fa"/>
  <!-- compass -->
  <circle cx="683.500" cy="181.800" r="3.300"/><path d="M683.500 181.800l1.600-1.800"/><path d="M681.500 179.600l0.300 0.300"/>
  <!-- image -->
  <rect x="680.200" y="194.800" width="6.600" height="6.400" rx="0.700"/><path d="M680.200 197h6.600"/><circle cx="685.300" cy="200" r="1.300" fill="#5d636c"/>
  <!-- pin -->
  <path d="M683.500 210.300a3 3 0 0 1 3 3c0 2-3 4.400-3 4.400s-3-2.400-3-4.400a3 3 0 0 1 3-3z"/><circle cx="683.500" cy="213.300" r="1.100"/>
 </g>
 <g fill="#8a90b8"><path d="M668.6 371.2h2l-1 1.200z"/><circle cx="669.300" cy="378" r="0.500"/><circle cx="670.300" cy="378" r="0.500"/><circle cx="669.300" cy="380" r="0.500"/><circle cx="670.300" cy="380" r="0.500"/><circle cx="669.300" cy="394" r="0.500"/><circle cx="670.300" cy="394" r="0.500"/><circle cx="669.300" cy="396" r="0.500"/><circle cx="670.300" cy="396" r="0.500"/></g>
 <circle cx="669.800" cy="387" r="1" fill="none" stroke="#8a90b8" stroke-width="0.400"/>
 <circle cx="680.800" cy="392.300" r="0.600" fill="#5d636c"/><circle cx="683.300" cy="392.300" r="0.600" fill="#5d636c"/><circle cx="685.800" cy="392.300" r="0.600" fill="#5d636c"/>
</svg>

<div class="a" style="left:0;top:401px;width:693.200px;height:12.300px;background:#f5f6f8"></div>
<div class="a" style="left:0;top:401px;width:693.200px;height:0.600px;background:#e0e2e6"></div>
<div class="t" style="left:3.8px;top:404.8px;font-size:5.6px;color:#2b2f36;">页面: 2/8</div>
<div class="t" style="left:31px;top:404.8px;font-size:5.6px;color:#2b2f36;">字数: 4162</div>
<div class="t" style="left:70.5px;top:404.9px;font-size:5.5px;color:#2b2f36;">拼写检查</div>
<div class="t" style="left:112px;top:404.9px;font-size:5.5px;color:#2b2f36;">文档校对</div>
<div class="t" style="left:571.3px;top:404.7px;font-size:5.7px;color:#4a4f57;">84%</div>

<svg style="left:0;top:401px" width="692" height="13" viewBox="0 400.400 692 13">
 <g stroke="#3c4047" stroke-width="0.600" fill="none">
  <rect x="62.300" y="404" width="5.400" height="5.600" rx="0.500"/><path d="M63.600 406.800l1.200 1.300l1.800-2.400"/>
  <rect x="104" y="404" width="5.400" height="5.600" rx="0.500"/><path d="M105.600 405.600l2.200 2.400M107.800 405.600l-2.200 2.400"/>
 </g>
 <path d="M94.0 406.5h2l-1 1.200z" fill="#3c4047"/>
 <rect x="495.800" y="402.500" width="9.600" height="9.600" rx="1" fill="#dfe2e8"/>
 <g stroke="#3c4047" stroke-width="0.650" fill="none">
  <path d="M477.500 407.500c1.200-2 5.600-2 6.800 0c-1.200 2-5.600 2-6.800 0z"/><circle cx="480.900" cy="407.500" r="1" fill="#3c4047"/><path d="M478 405l-0.600-0.800M480.900 404.600v-1M483.800 405l0.600-0.800"/>
  <rect x="497.800" y="403.800" width="5.600" height="7"/><path d="M499 405.800h3.200M499 407.400h3.200M499 409h3.200"/>
  <path d="M508 404.300h6.400M509.600 406.300h4.800M508 408.300h6.400M509.600 410.300h4.800"/>
  <path d="M519.300 404.400h3v6h-3zM522.300 404.400h3v6h-3zM520.800 411l1.500-0.800l1.500 0.800"/>
  <circle cx="534.500" cy="407.300" r="3.200"/><path d="M531.300 407.300h6.400M534.500 404.100c-2 2-2 4.400 0 6.400M534.500 404.100c2 2 2 4.400 0 6.400"/>
  <path d="M543.300 410.300l0.600-1.800l4-4l1.300 1.300l-4 4z"/><path d="M543 411.200h6.400"/>
  <path d="M561.300 405.400v-1.400h1.400M566.300 404h1.400v1.400M567.700 409.400v1.400h-1.400M562.700 410.800h-1.400v-1.400"/><rect x="563" y="405.800" width="3" height="3.200"/>
  <path d="M592 407.400h3.600" stroke-width="0.800"/>
  <path d="M669.300 407.400h4M671.300 405.400v4" stroke-width="0.800"/>
  <path d="M680.800 405.600v-1.600h1.600M685 404h1.600v1.600M686.600 409.200v1.600h-1.600M682.400 410.800h-1.600v-1.600M681 404.200l2 2M686.400 404.200l-2 2M681 410.600l2-2M686.400 410.600l-2-2" stroke-width="0.550"/>
 </g>
 <path d="M586.7 406.9h2l-1 1.200z" fill="#3c4047"/>
 <path d="M602.500 407.400h62" stroke="#8a9099" stroke-width="0.500"/>
 <circle cx="627.300" cy="407.400" r="2.500" fill="#fff" stroke="#3c4047" stroke-width="0.600"/>
 <circle cx="634" cy="407.400" r="0.350" fill="#8a9099"/>
</svg>


<div class="a" style="left:0;top:413.200px;width:693.200px;height:17.800px;background:linear-gradient(180deg,#4f88b8 0%,#35709f 45%,#2a6296 52%,#2a6499 100%)"></div>
<div class="a" style="left:0;top:413.200px;width:693.200px;height:0.600px;background:#6f9cc4"></div>
<div class="a" style="left:430px;top:413.200px;width:263.200px;height:17.800px;background:linear-gradient(90deg,rgba(26,78,140,0) 0%,rgba(26,78,140,.9) 30%,rgba(27,79,141,1) 100%)"></div>
<svg style="left:440px;top:413px" width="120" height="18" viewBox="0 0 120 18"><path d="M20 0c30 3 46 10 58 18" stroke="rgba(190,215,240,.35)" stroke-width="1.300" fill="none"/></svg>
<!-- start orb -->
<div class="a" style="left:3.500px;top:414.500px;width:16px;height:16px;border-radius:50%;background:radial-gradient(circle at 50% 35%,#7fc0f2 0%,#2e78c2 55%,#123f7c 100%);box-shadow:0 0 1px #0b2a55"></div>
<svg style="left:6.500px;top:417.500px" width="10" height="10" viewBox="0 0 10 10"><path d="M0.800 1.800c1.200-0.600 2.400-0.600 3.600 0v2.900c-1.200-0.500-2.400-0.500-3.600 0z" fill="#e8592c"/><path d="M5.200 1.900c1.200 0.600 2.600 0.500 3.800-0.100v2.900c-1.200 0.600-2.600 0.600-3.800 0z" fill="#7fc243"/><path d="M0.800 5.600c1.200-0.600 2.400-0.600 3.600 0v2.900c-1.200-0.500-2.400-0.500-3.600 0z" fill="#3d9be4"/><path d="M5.200 5.700c1.200 0.600 2.600 0.500 3.800-0.100v2.900c-1.200 0.600-2.600 0.600-3.800 0z" fill="#f6c52f"/></svg>
<!-- cat -->
<svg style="left:31px;top:416px" width="12" height="13" viewBox="0 0 12 13"><path d="M1.300 11.500v-7l-0.300-3l2.600 2h4.800l2.600-2l-0.300 3v7z" fill="#1d2540"/><circle cx="4.200" cy="7" r="0.700" fill="#6aa6ff"/><circle cx="7.800" cy="7" r="0.700" fill="#6aa6ff"/></svg>
<!-- folder button -->
<div class="a" style="left:51px;top:414px;width:57.500px;height:17px;border-radius:1.500px;background:linear-gradient(180deg,rgba(185,215,240,.55),rgba(120,165,210,.35) 48%,rgba(70,120,175,.35) 52%,rgba(110,160,205,.4));border:0.600px solid rgba(200,225,245,.55)"></div>
<svg style="left:54.500px;top:415.500px" width="12" height="14" viewBox="0 0 12 14"><path d="M1 2.200l2.600-1.200l1 1.600h4.800v10.400h-8.400z" fill="#e9c55b"/><path d="M3.800 3.200l4.600-1v10l-4.600 0.800z" fill="#f6e3a1"/><path d="M1 4.400h3.200v8.600h-3.200z" fill="#dcae3f"/></svg>
<div class="t" style="left:69px;top:419.500px;font-size:5.300px;color:#fff;text-shadow:0 0 1px #123">C:\Users\A...</div>
<!-- chrome -->
<svg style="left:114.500px;top:415.500px" width="14" height="14" viewBox="0 0 14 14"><circle cx="7" cy="7" r="6.300" fill="#e8e8e8"/><path d="M7 7L1.550 3.850A6.300 6.300 0 0 1 12.450 3.850z" fill="#e33b2e"/><path d="M7 7L12.450 3.850A6.300 6.300 0 0 1 7 13.300z" fill="#f7c92c"/><path d="M7 7L7 13.300A6.300 6.300 0 0 1 1.550 3.850z" fill="#2ea24b"/><circle cx="7" cy="7" r="2.900" fill="#fff"/><circle cx="7" cy="7" r="2.200" fill="#3f7fe6"/></svg>
<!-- blue bubble -->
<svg style="left:139px;top:415.500px" width="15" height="14" viewBox="0 0 15 14"><path d="M6.400 1.600c2.700 0 4.800 1.800 4.800 4.100c0 2.300-2.100 4.100-4.800 4.100c-0.600 0-1.200-0.100-1.700-0.200l-2.200 1.400l0.500-2.300c-0.900-0.800-1.400-1.800-1.400-3c0-2.300 2.100-4.100 4.800-4.100z" fill="none" stroke="#2d8cf0" stroke-width="1.300"/><path d="M9 10.500l3.300-2.200M9 10.500l3.600 1.600" stroke="#e8a23a" stroke-width="0.700"/><circle cx="9" cy="10.500" r="1.100" fill="#f2b13a"/><circle cx="12.500" cy="8.300" r="1" fill="#4aa8f0"/><circle cx="12.700" cy="12.200" r="1.100" fill="#5bbf4a"/></svg>
<!-- WPS button active -->
<div class="a" style="left:159.500px;top:414px;width:57.500px;height:17px;border-radius:1.500px;background:linear-gradient(180deg,rgba(215,232,248,.8),rgba(165,198,230,.65) 48%,rgba(120,165,210,.6) 52%,rgba(160,198,232,.7));border:0.600px solid rgba(225,240,252,.8)"></div>
<svg style="left:163.500px;top:416px" width="14" height="14" viewBox="0 0 14 14"><path d="M0.600 1h3l1.700 6l1.300-3.600h-1.400l0.700-2.400h6.400l-2.800 8.400h-2.400l-0.700-2l-0.800 2h-2.400z" fill="#e5322b"/><path d="M8.600 3.400h-1.200l1.300 3.800z" fill="#fff" opacity="0.850"/><rect x="7.600" y="7.400" width="5.600" height="6" rx="1.300" fill="#3f80f0" stroke="#e6efff" stroke-width="0.500"/><path d="M9 9h2.800v3h-2.800zM9 10.500h2.800" stroke="#fff" stroke-width="0.500" fill="none"/></svg>
<div class="t" style="left:179px;top:419.500px;font-size:5.300px;color:#fff;text-shadow:0 0 1px #123">中共中央办...</div>
<div class="t" style="left:589.800px;top:420px;font-size:4.800px;color:#e6eef8">CH</div>
<div class="a" style="left:598.500px;top:418px;width:7.500px;height:7.500px;border-radius:1.300px;background:#f0642a"></div>
<div class="t" style="left:600.200px;top:418.300px;font-size:7px;color:#fff;font-weight:700;font-style:italic">S</div>


<div class="a" style="left:693.200px;top:11px;width:104.800px;height:420px;background:#1b1b1c"></div>
<div class="a" style="left:695.300px;top:15px;width:98.700px;height:396px;background:#464647"></div>
<div class="a" style="left:695.300px;top:15px;width:98.700px;height:0.800px;background:#2f5a45"></div>
<div class="a" style="left:794px;top:11px;width:4px;height:400px;background:#2c2c2d"></div>
<div class="a" style="left:796px;top:72.500px;width:1.300px;height:12.500px;background:#5d8fd0"></div>
<svg style="left:692px;top:146px" width="4" height="8" viewBox="0 0 4 8"><path d="M0.600 1l2.600 3l-2.600 3z" fill="#2f88ff"/></svg>

<div class="a" style="left:697.400px;top:74.8px;width:95px;height:2.0px;background:#3a3a3b"></div>
<div class="a" style="left:697.400px;top:133px;width:95px;height:2.0px;background:#3a3a3b"></div>
<div class="a" style="left:697.400px;top:191.8px;width:95px;height:1.7px;background:#3a3a3b"></div>
<div class="a" style="left:697.400px;top:249.6px;width:95px;height:2.2px;background:#3a3a3b"></div>
<div class="a" style="left:697.4px;top:19.5px;width:94.9px;height:53.5px;background:#323233"></div>
<svg style="left:731.800px;top:29.7px" width="26.4" height="26.4" viewBox="0 0 26 26.00"><defs><clipPath id="c1"><rect width="26" height="32" rx="3.200"/></clipPath><linearGradient id="g1" x1="0" y1="0" x2="0" y2="1"><stop offset="0" stop-color="#2584d6"/><stop offset="1" stop-color="#3a92de"/></linearGradient></defs><g clip-path="url(#c1)"><rect width="26" height="26" fill="url(#g1)"/>
<path d="M0 26c0-2.600 1.500-4.300 7-6.300l6 1.500l6-1.500c5.500 2 7 3.700 7 6.300z" fill="#14161b"/>
<path d="M10.200 16h5.600v4.600l-2.800 2.200l-2.800-2.200z" fill="#cfa288"/>
<path d="M9.200 19.300l1.300 0.500l2.500 2.300l2.500-2.300l1.300-0.500l-0.500 3.300l-3.300 3.600l-3.300-3.600z" fill="#eef0f4"/><path d="M12.200 22.200h1.600l1 3.800h-3.600z" fill="#454c68"/>
<ellipse cx="13" cy="11.800" rx="5.600" ry="7.500" fill="#dfb69c"/>
<path d="M7.200 11.600c-1.300-7.400 1.800-10.500 5.800-10.500s7.100 3.100 5.800 10.500c-0.300-2.800-0.900-4.600-1.800-5.600c-2.600 0.500-5.400 0.500-8 0c-0.900 1-1.500 2.800-1.800 5.600z" fill="#15161a"/>
<path d="M8.600 10.600h3.600v1.700h-3.600zM13.800 10.600h3.600v1.700h-3.600zM12.200 11.200h1.600" stroke="#9a8f8c" stroke-width="0.350" fill="none"/>
<path d="M9.400 11.400h2M14.600 11.400h2" stroke="#5f4234" stroke-width="0.600"/><path d="M11.600 16.400c0.900 0.400 1.900 0.400 2.800 0" stroke="#b4705e" stroke-width="0.600" fill="none"/>
</g></svg>
<div class="a" style="left:697.500px;top:62px;width:12.2px;height:11.0px;background:#f08a24"></div>
<svg style="left:699.8px;top:63.7px" width="7.600" height="7.600" viewBox="0 0 8 8"><circle cx="4" cy="2.600" r="1.700" fill="#fff"/><path d="M0.800 7.600c0-2.200 1.400-3 3.200-3s3.200 0.800 3.200 3z" fill="#fff"/></svg>
<div class="a" style="left:709.7px;top:62.3px;width:28.8px;height:10.7px;background:rgba(0,0,0,0.400)"></div>
<svg style="left:711.8px;top:64.7px" width="5.4" height="5.9" viewBox="0 0 7.400 8"><g transform="rotate(18 3.700 4)"><rect x="2.300" y="0.400" width="2.800" height="4.300" rx="1.400" fill="#f4f4f4"/><path d="M1.100 3.500a2.600 2.600 0 0 0 5.200 0M3.700 6.100v1.300M2.500 7.500h2.400" stroke="#e6e6e6" stroke-width="0.800" fill="none"/></g><path d="M0.700 7.300l6-6.400" stroke="#e8463c" stroke-width="0.85"/></svg>
<div class="t" style="left:720.3px;top:65.4px;font-size:5.400px;color:#f4f4f4">李方联</div>
<div class="a" style="left:697.4px;top:78.3px;width:94.9px;height:52.9px;background:#323233"></div>
<svg style="left:731.800px;top:88.3px" width="26.4" height="26.4" viewBox="0 0 26 26.00"><defs><clipPath id="c2"><rect width="26" height="32" rx="3.200"/></clipPath><linearGradient id="g2" x1="0" y1="0" x2="0" y2="1"><stop offset="0" stop-color="#43b2e8"/><stop offset="1" stop-color="#6cc8f0"/></linearGradient></defs><g clip-path="url(#c2)"><rect width="26" height="26" fill="url(#g2)"/>
<path d="M2.200 26c-0.800-4 0.400-7 1.400-11c0.600-7.600 3.900-13 9.700-13.300c5.800 0.300 9.100 5.700 9.700 13.300c1 4 2.200 7 1.400 11z" fill="#17151b"/>
<path d="M4.500 26c0.800-1.600 2.500-2.600 4.500-3h8.600c2 0.400 3.700 1.400 4.500 3z" fill="#f3dfdc"/>
<ellipse cx="13.300" cy="15" rx="7.700" ry="10" fill="#e8c2aa"/>
<path d="M4.800 16c-1.200-8.600 2.800-13.600 8.500-13.600s9.700 5 8.500 13.600c-0.400-3.600-1.300-6.200-3-8c-1.800 0.600-3.800 0.200-5.500-1.400c-1.700 1.600-3.700 2-5.500 1.400c-1.700 1.800-2.600 4.400-3 8z" fill="#17151b"/>
<path d="M6.300 13.600h5.800v2.600h-5.800zM14.500 13.600h5.800v2.600h-5.800zM12.100 14.400h2.400" stroke="#5a5a66" stroke-width="0.600" fill="rgba(200,205,215,0.250)"/>
<path d="M7.600 14.800h2.600M16 14.800h2.600" stroke="#4a3630" stroke-width="0.600"/>
<path d="M11.300 20.800c1.300 0.600 2.900 0.600 4.200 0" stroke="#c86e66" stroke-width="0.900" fill="none"/>
</g></svg>
<div class="a" style="left:697.8px;top:120.6px;width:22.2px;height:10.2px;background:rgba(0,0,0,0.400)"></div>
<svg style="left:699.9px;top:122.8px" width="5.4" height="5.9" viewBox="0 0 7.400 8"><g transform="rotate(18 3.700 4)"><rect x="2.300" y="0.400" width="2.800" height="4.300" rx="1.400" fill="#f4f4f4"/><path d="M1.100 3.500a2.600 2.600 0 0 0 5.200 0M3.700 6.100v1.300M2.500 7.500h2.400" stroke="#e6e6e6" stroke-width="0.800" fill="none"/></g><path d="M0.700 7.300l6-6.400" stroke="#e8463c" stroke-width="0.85"/></svg>
<div class="t" style="left:707.1px;top:123.5px;font-size:5.400px;color:#f4f4f4">刘恩</div>
<div class="a" style="left:697.4px;top:137.2px;width:93.0px;height:53.0px;background:#323233"></div>
<svg style="left:731.800px;top:146.8px" width="26.4" height="26.4" viewBox="0 0 26 26.00"><defs><clipPath id="c3"><rect width="26" height="32" rx="3.200"/></clipPath><linearGradient id="g3" x1="0" y1="0" x2="0" y2="1"><stop offset="0" stop-color="#1978dc"/><stop offset="1" stop-color="#3a98f0"/></linearGradient></defs><g clip-path="url(#c3)"><rect width="26" height="26" fill="url(#g3)"/>
<path d="M4.600 26c-0.600-4-0.300-8 0-12c0.500-7.600 3.300-12.400 8.600-12.700c5.300 0.300 8.100 5.100 8.600 12.700c0.300 4 0.600 8 0 12z" fill="#2e1d1a"/>
<path d="M1 26c0.500-2.300 2.500-3.700 6-4.600l6.200 1.600l6.200-1.600c3.500 0.900 5.500 2.300 6 4.600z" fill="#16171c"/>
<path d="M9 22l4.200 4l4.200-4l-1.400-1.800h-5.600z" fill="#f6f6f8"/>
<path d="M11.200 18h4v4.200l-2 1.800l-2-1.800z" fill="#ecc9b8"/>
<ellipse cx="13.200" cy="13.600" rx="5.500" ry="7" fill="#f4d8cb"/>
<path d="M7.500 15c-1.200-8 1.800-11.800 5.700-11.800s6.900 3.800 5.700 11.800c-0.200-2.400-0.600-4.400-1.200-5.800c-3 0.800-6 0.800-9 0c-0.600 1.400-1 3.400-1.200 5.800z" fill="#2e1d1a"/>
<path d="M9.600 12.800h2.400M14.400 12.800h2.400" stroke="#3f2a24" stroke-width="0.800"/><path d="M11.800 17.600c0.900 0.500 1.900 0.500 2.800 0" stroke="#d65a5e" stroke-width="1" fill="none"/>
</g></svg>
<div class="a" style="left:697.8px;top:180.3px;width:27.8px;height:9.3px;background:rgba(0,0,0,0.400)"></div>
<svg style="left:699.9px;top:182.0px" width="5.4" height="5.9" viewBox="0 0 7.400 8"><g transform="rotate(18 3.700 4)"><rect x="2.300" y="0.400" width="2.800" height="4.300" rx="1.400" fill="#f4f4f4"/><path d="M1.100 3.500a2.600 2.600 0 0 0 5.200 0M3.700 6.100v1.300M2.500 7.500h2.400" stroke="#e6e6e6" stroke-width="0.800" fill="none"/></g><path d="M0.700 7.300l6-6.400" stroke="#e8463c" stroke-width="0.85"/></svg>
<div class="t" style="left:707.1px;top:182.7px;font-size:5.400px;color:#f4f4f4">王梦婕</div>
<div class="a" style="left:697.4px;top:195px;width:93.0px;height:52.6px;background:#323233"></div>
<svg style="left:731.800px;top:205.5px" width="26.4" height="26.4" viewBox="0 0 26 26.00"><defs><clipPath id="c4"><rect width="26" height="32" rx="3.200"/></clipPath><linearGradient id="g4" x1="0" y1="0" x2="0" y2="1"><stop offset="0" stop-color="#1e86f6"/><stop offset="1" stop-color="#2b90f8"/></linearGradient></defs><g clip-path="url(#c4)"><rect width="26" height="26" fill="url(#g4)"/>
<path d="M0 26c0.200-3 2.200-5 7.600-6.600l5.500 1.600l5.500-1.600c5.400 1.600 7.400 3.600 7.600 6.600z" fill="#101115"/>
<path d="M10.200 15h5.800v5l-2.900 1.600l-2.900-1.600z" fill="#c9a086"/>
<path d="M9.300 19.300l3.800 2.300l3.800-2.300l1 1.700l-4.800 2.800l-4.800-2.800z" fill="#1e1f25"/>
<ellipse cx="13.100" cy="11.300" rx="5.900" ry="7.400" fill="#ddb69c"/>
<path d="M7 10.600c-1.200-6.800 2-9.800 6.100-9.800s7.300 3 6.100 9.800c-0.300-2.200-0.900-3.800-1.800-4.700c-2.800 0.500-5.800 0.500-8.600 0c-0.900 0.900-1.500 2.500-1.800 4.700z" fill="#141519"/>
<path d="M9.200 10.800h2.800M14.200 10.800h2.800" stroke="#4f382e" stroke-width="0.750"/><path d="M12.500 11.500v2.800" stroke="#c09478" stroke-width="0.600"/><path d="M11.400 15.900c1 0.400 2.400 0.400 3.400 0" stroke="#9a6252" stroke-width="0.700" fill="none"/>
</g></svg>
<div class="a" style="left:697.8px;top:238.3px;width:56.2px;height:9.1px;background:rgba(0,0,0,0.400)"></div>
<svg style="left:699.9px;top:239.9px" width="5.4" height="5.9" viewBox="0 0 7.400 8"><g transform="rotate(18 3.700 4)"><rect x="2.300" y="0.400" width="2.800" height="4.300" rx="1.400" fill="#f4f4f4"/><path d="M1.100 3.500a2.600 2.600 0 0 0 5.200 0M3.700 6.100v1.300M2.500 7.500h2.400" stroke="#e6e6e6" stroke-width="0.800" fill="none"/></g><path d="M0.700 7.300l6-6.400" stroke="#e8463c" stroke-width="0.85"/></svg>
<div class="t" style="left:707.1px;top:240.6px;font-size:5.400px;color:#f4f4f4">马红波<span style="color:#3f8cf5">@腾讯会议</span></div>
<div class="a" style="left:697.4px;top:253.6px;width:93.0px;height:34.0px;background:#323233"></div>
<svg style="left:731.900px;top:263.900px" width="26.600" height="22.700" viewBox="0 0 26.600 22.700"><defs><clipPath id="c5"><rect width="26.600" height="22.700" rx="3"/></clipPath><linearGradient id="g5" x1="0" y1="0" x2="0" y2="1"><stop offset="0" stop-color="#d3e0f4"/><stop offset="1" stop-color="#f2f4f8"/></linearGradient></defs><g clip-path="url(#c5)"><rect width="26.600" height="22.700" fill="url(#g5)"/><ellipse cx="9" cy="5" rx="8" ry="3.500" fill="#f4f6fa"/><ellipse cx="20" cy="8" rx="7" ry="3" fill="#f6f7fa"/><path d="M0 11.500l2-0.600l1.500 0.800l2-1l1.500 0.500l1.500-1.500l1.500 0.800l0.800-1.200v-2.600l0.700-1.200l0.700 1.200v2.400l1.300 0.600l1.400-0.400l1 -1.800l1 1.600l1.500 0.400l2 1l2 0.500v9h-24.400z" fill="#6e5238"/><path d="M0 14c2-0.800 4-0.600 6 0.200s4 1.200 6 0.600s4-0.800 6-0.200l3 1v4h-21z" fill="#5a4a30"/><path d="M2 17.500c1.500-1.200 3.500-1.400 5-0.400c1.500-0.800 3-0.600 4 0.400v2h-9z" fill="#3f4a2a"/><path d="M0 19.800c5-0.800 12-1 20-0.400v3.300h-20z" fill="#f1f1ee"/><path d="M21.300 11.200c0.500-1.800 3.500-1.800 4.200 0c0.800 2.500 1 6 0.800 11.500h-5.600c-0.300-5.500 0-9 0.600-11.500z" fill="#1c1a1e"/><circle cx="23.300" cy="11.200" r="1.500" fill="#d9b8a4"/><path d="M21.700 10.600c0.300-1.800 2.900-1.800 3.300 0c-1-0.700-2.200-0.700-3.300 0z" fill="#2a2020"/></g></svg>
<div class="a" style="left:697px;top:292.8px;width:94.7px;height:56.8px;background:#232324"></div>
<svg style="left:735.800px;top:302px" width="30.800" height="30.800" viewBox="0 0 30.800 30.800"><defs><clipPath id="c6"><circle cx="15.400" cy="15.400" r="15.400"/></clipPath><radialGradient id="g6" cx="0.500" cy="0.500" r="0.600"><stop offset="0" stop-color="#1247c8"/><stop offset="0.650" stop-color="#0c3aae"/><stop offset="1" stop-color="#08277e"/></radialGradient></defs><g clip-path="url(#c6)"><rect width="30.800" height="30.800" fill="url(#g6)"/><g fill="#f6e88e"><circle cx="19" cy="2.200" r="1.150"/><circle cx="16.300" cy="8.700" r="1"/><circle cx="21.700" cy="10.500" r="0.750"/><circle cx="5.400" cy="14.200" r="0.900"/><circle cx="9.500" cy="3" r="0.400"/><circle cx="12.500" cy="6" r="0.350"/><circle cx="24.500" cy="6.500" r="0.350"/></g><path d="M23.500 12.500l2.500 2.500l-1.500 3" stroke="#4a74dc" stroke-width="0.600" fill="none"/><path d="M16.300 2v5.500M21.700 4v5.500M5.400 8v5" stroke="#3a66d4" stroke-width="0.300"/><ellipse cx="15.600" cy="28.600" rx="10.200" ry="3.400" fill="#c98a3e"/><ellipse cx="14.500" cy="27.600" rx="7" ry="1.600" fill="#e0a552"/><path d="M10.300 25.800l0.500-4.600h1.600l0.700 4.600z" fill="#5aa86a"/><circle cx="11.500" cy="19.300" r="1.450" fill="#f0d25a"/><path d="M10.600 21.300c-2.500 0.300-5 1.400-8.200 1.200c2.800 1.300 6 1 8.400 0.200z" fill="#f2dc72"/><path d="M15.200 25.500v-3.500a1.500 1.800 0 0 1 3 0v3.500" stroke="#5c86e6" stroke-width="0.450" fill="none"/><path d="M16.700 25.800v-3.600" stroke="#3f8a4a" stroke-width="0.500"/><circle cx="16.700" cy="21.600" r="1.050" fill="#e9503c"/></g></svg>
<div class="a" style="left:697.4px;top:339.5px;width:25.6px;height:9.7px;background:rgba(0,0,0,0.400)"></div>
<svg style="left:699.6px;top:340.3px" width="7.4" height="8" viewBox="0 0 7.400 8"><g transform="rotate(18 3.700 4)"><rect x="2.300" y="0.400" width="2.800" height="4.300" rx="1.400" fill="#f4f4f4"/><path d="M1.100 3.500a2.600 2.600 0 0 0 5.200 0M3.700 6.100v1.300M2.500 7.500h2.400" stroke="#e6e6e6" stroke-width="0.800" fill="none"/></g><path d="M0.700 7.300l6-6.400" stroke="#e8463c" stroke-width="1.05"/></svg>
<div class="t" style="left:709.1px;top:342.1px;font-size:5.400px;color:#f4f4f4">苏昊</div>
<div class="a" style="left:697px;top:355px;width:94.7px;height:51.3px;background:#313132"></div>
<svg style="left:732.300px;top:363.700px" width="27" height="27" viewBox="0 0 27 27"><defs><clipPath id="c7"><circle cx="13.500" cy="13.500" r="13.500"/></clipPath></defs><g clip-path="url(#c7)"><rect width="27" height="27" fill="#4f2f92"/><path d="M0 0h27v11h-27z" fill="#261d2e"/><g transform="translate(13.500 14.500) scale(1.100 1.080) translate(-14.400 -14.300)"><path d="M3.600 8.200c2.600-2 5.400-3 8.400-3h9.800c1.800 1 3 2.400 3.400 4.300c0.300 2.800 0 5.400-0.700 7.800c-0.800 2.600-2 4.600-3.700 6.200c-1.500 1.400-3.200 2.400-5 3c-1.700-0.100-3.400-0.600-4.800-1.600c-2-1.500-3.800-3.600-5-6c-1.200-2.300-2-5-2.400-8z" fill="#f1e11c"/><path d="M3.600 8.200c2.400-1.800 5-2.800 7.800-3c0.300 1.600 0.500 3.200 0.300 4.800c-0.300 2-1 3.800-0.800 5.800c0.100 1.400 1 2.600 1 4c0 2-0.600 3.600-1 5.400c-2-1.500-3.700-3.500-4.900-5.900c-1.200-2.300-2-5-2.400-8z" fill="#8c6a4e"/><path d="M3.600 8.200c0.800-0.600 1.700-1.100 2.600-1.500c-0.400 3-0.200 6 0.600 9c0.600 2.300 1.600 4.400 3 6.300c-1.600-1.300-2.900-2.900-3.800-4.800c-1.200-2.300-2-5-2.400-8z" fill="#6b4a86" opacity="0.850"/><path d="M4.600 7.200c1.400-0.800 3-0.900 4.400-0.200" stroke="#3a2a2c" stroke-width="0.700" fill="none"/><ellipse cx="6.700" cy="8.500" rx="1.700" ry="0.850" fill="#2a2028"/><path d="M15.200 6.600c1.600-0.900 3.400-0.900 5 0" stroke="#4a3a2a" stroke-width="0.700" fill="none"/><ellipse cx="17.700" cy="8" rx="1.700" ry="0.850" fill="#2f2528"/><ellipse cx="21.300" cy="9.600" rx="2.300" ry="1.600" fill="#e9e5de"/><path d="M12.300 9c0.300 2.400-0.400 4.600-0.600 7l1.800 0.700" stroke="#6e4e38" stroke-width="0.700" fill="none"/><ellipse cx="13.200" cy="20.600" rx="2.300" ry="0.800" fill="#9a6e48"/><path d="M11 20.400c1.500-0.600 3-0.600 4.400 0" stroke="#6e4a34" stroke-width="0.500" fill="none"/></g></g></svg>
<div class="a" style="left:697.500px;top:397.4px;width:9.7px;height:8.9px;background:#f08a24"></div>
<svg style="left:698.6px;top:398.1px" width="7.600" height="7.600" viewBox="0 0 8 8"><circle cx="4" cy="2.600" r="1.700" fill="#fff"/><path d="M0.800 7.600c0-2.200 1.400-3 3.200-3s3.200 0.800 3.200 3z" fill="#fff"/></svg>
<div class="a" style="left:707.2px;top:397.7px;width:27.8px;height:8.6px;background:rgba(0,0,0,0.400)"></div>
<svg style="left:709.4px;top:397.9px" width="7.4" height="8" viewBox="0 0 7.400 8"><g transform="rotate(18 3.700 4)"><rect x="2.300" y="0.400" width="2.800" height="4.300" rx="1.400" fill="#f4f4f4"/><path d="M1.100 3.500a2.600 2.600 0 0 0 5.200 0M3.700 6.100v1.300M2.500 7.500h2.400" stroke="#e6e6e6" stroke-width="0.800" fill="none"/></g><path d="M0.700 7.300l6-6.400" stroke="#e8463c" stroke-width="1.05"/></svg>
<div class="t" style="left:718.9px;top:399.8px;font-size:5.400px;color:#f4f4f4">何卫平</div>
<div class="a" style="left:695.300px;top:406.900px;width:98.700px;height:4.200px;background:#29292a"></div>
<div class="a" style="left:698px;top:407.800px;width:94.500px;height:2.700px;background:#4c4c4d;border-radius:1px"></div>
<div class="a" style="left:793px;top:289px;width:3.600px;height:119px;background:#474748;border-radius:1px"></div>

<div class="a" style="left:693.200px;top:411px;width:104.800px;height:20px;background:#202021"></div>
<div class="a" style="left:696.500px;top:414.500px;width:54.500px;height:9.500px;border-radius:4.700px;background:#171718"></div>
<svg style="left:699.500px;top:416.300px" width="6" height="6" viewBox="0 0 6 6"><circle cx="2.500" cy="2.500" r="1.800" fill="none" stroke="#7a7a7a" stroke-width="0.600"/><path d="M3.800 3.800l1.600 1.600" stroke="#7a7a7a" stroke-width="0.600"/></svg>
<div class="t" style="left:706.700px;top:416.600px;font-size:5.300px;color:#c8c8c8">搜索列表</div>
<svg style="left:756px;top:414px" width="42" height="11" viewBox="756 413 42 11">
 <g stroke="#5a5a5b" stroke-width="0.650" fill="none"><path d="M758.500 415.300h3l1.500 1.500v5h-4.500z"/><path d="M761.500 415.300v1.500h1.500M759.600 418.800h2.300M759.600 420.300h2.300"/>
 <path d="M771.500 418.500a2.700 2.700 0 0 1 4.800-1.700M776.900 418.500a2.700 2.700 0 0 1-4.800 1.700"/><path d="M776.400 415.300v1.600h-1.600M772 421.700v-1.600h1.600"/></g>
 <path d="M784.600 417.400h5l-0.600 1.400l0.300 2.600h-2.600l-0.700-1.300l-1-0.400z" fill="#2a7de8"/><path d="M783.800 416.900l3-1.300l3.400 1.300" stroke="#2a7de8" stroke-width="0.800" fill="none"/>
</svg>

</div>
</body></html>
